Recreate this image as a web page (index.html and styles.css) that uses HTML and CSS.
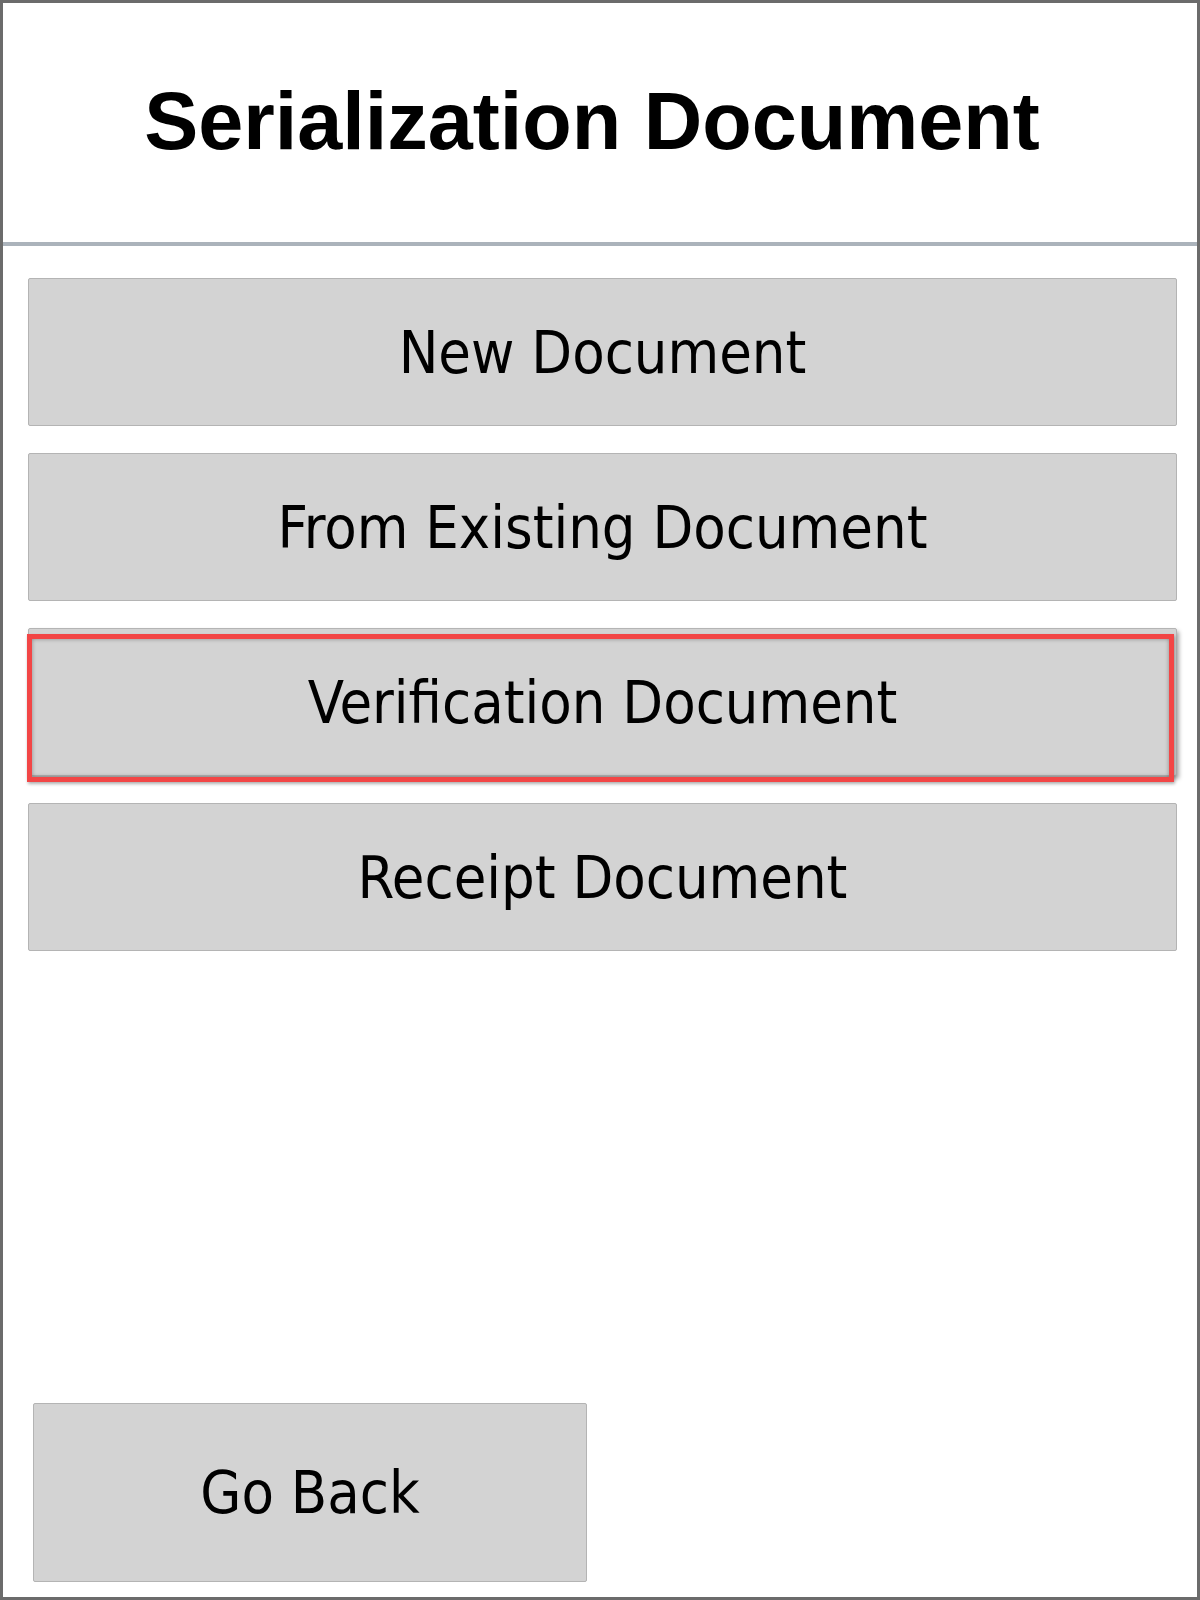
FILE: index.html
```html
<!DOCTYPE html>
<html lang="en">
<head>
<meta charset="utf-8">
<title>Serialization Document</title>
<link rel="stylesheet" href="styles.css">
</head>
<body>
<div class="window">
  <header class="header">
    <h1 class="title">Serialization Document</h1>
  </header>
  <div class="options">
    <button class="btn">New Document</button>
    <button class="btn">From Existing Document</button>
    <button class="btn btn-selected">Verification Document<span class="highlight"></span></button>
    <button class="btn">Receipt Document</button>
  </div>
  <div class="footer">
    <button class="btn btn-back">Go Back</button>
  </div>
</div>
</body>
</html>
```
FILE: styles.css
```css
html, body {
  margin: 0;
  padding: 0;
  background: #ffffff;
}

.window {
  box-sizing: border-box;
  width: 1200px;
  height: 1600px;
  border: 3px solid #6b6b6b;
  display: flex;
  flex-direction: column;
  background: #ffffff;
}

.header {
  box-sizing: border-box;
  height: 243px;
  flex: none;
  display: flex;
  align-items: center;
  justify-content: center;
  padding-right: 16px;
  padding-bottom: 2px;
  border-bottom: 4px solid #abb3bb;
}

.title {
  margin: 0;
  font-family: "Liberation Sans", Arial, sans-serif;
  font-weight: bold;
  font-size: 81px;
  line-height: 1;
  color: #000000;
}

.options {
  display: flex;
  flex-direction: column;
  gap: 27px;
  margin-top: 32px;
  padding-left: 25px;
  padding-right: 20px;
}

.btn {
  box-sizing: border-box;
  position: relative;
  height: 148px;
  width: 100%;
  margin: 0;
  padding: 0;
  background: #d3d3d3;
  border: 1px solid #b4b4b4;
  border-radius: 2px;
  font-family: "DejaVu Sans Condensed", "DejaVu Sans", sans-serif;
  font-stretch: condensed;
  font-size: 59px;
  color: #000000;
  text-align: center;
}

.btn-selected {
  box-shadow: 2px 3px 4px rgba(0, 0, 0, 0.35);
}

.highlight {
  position: absolute;
  left: -2px;
  right: 2px;
  top: 5px;
  bottom: -7px;
  border: 5px solid #f24646;
  box-shadow: inset 0 0 4px rgba(0, 0, 0, 0.35), 1px 2px 3px rgba(0, 0, 0, 0.3);
  pointer-events: none;
}

.footer {
  margin-top: auto;
  padding-left: 30px;
  padding-bottom: 15px;
}

.btn-back {
  width: 554px;
  height: 179px;
}
```
